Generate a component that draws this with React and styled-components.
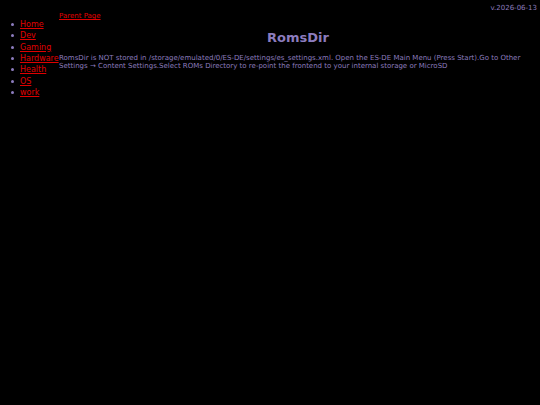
import React from "react";
import styled, { createGlobalStyle } from "styled-components";

const Global = createGlobalStyle`
  body {
    margin: 0;
    background: #000;
    color: #8c7cbe;
    font-family: "DejaVu Sans", Verdana, sans-serif;
    font-size: 7px;
    line-height: 8px;
  }
`;

const Page = styled.div`
  display: flex;
  flex-direction: column;
`;

const TopBar = styled.header`
  display: flex;
  justify-content: flex-end;
  padding: 4px 3px 0;
`;

const Columns = styled.div`
  display: grid;
  grid-template-columns: 59px 1fr;
`;

const Menu = styled.ul`
  display: grid;
  grid-auto-rows: 1fr;
  min-height: 79px;
  margin: 7px 0 0;
  padding: 0 0 0 11px;
  list-style: none;
  font-size: 8px;
  line-height: 11px;
  white-space: nowrap;
`;

const MenuItem = styled.li`
  display: flex;
  align-items: center;
  gap: 6px;

  &::before {
    content: "";
    width: 3px;
    height: 3px;
    border-radius: 50%;
    background: currentColor;
  }
`;

const Link = styled.a`
  color: #e00000;
  text-decoration: underline;
`;

const Content = styled.main`
  padding-right: 3px;
`;

const Title = styled.h1`
  margin: 10px 0 8px;
  font-size: 13px;
  line-height: 16px;
  text-align: center;
`;

const Text = styled.p`
  margin: 0;
`;

const pages = ["Home", "Dev", "Gaming", "Hardware", "Health", "OS", "work"];

export default function App() {
  return (
    <Page>
      <Global />
      <TopBar>v.2026-06-13</TopBar>
      <Columns>
        <nav>
          <Menu>
            {pages.map((page) => (
              <MenuItem key={page}>
                <Link href="#">{page}</Link>
              </MenuItem>
            ))}
          </Menu>
        </nav>
        <Content>
          <Link href="#">Parent Page</Link>
          <Title>RomsDir</Title>
          <Text>
            RomsDir is NOT stored in /storage/emulated/0/ES-DE/settings/es_settings.xml. Open the
            ES-DE Main Menu (Press Start).Go to Other Settings → Content Settings.Select ROMs
            Directory to re-point the frontend to your internal storage or MicroSD
          </Text>
        </Content>
      </Columns>
    </Page>
  );
}
